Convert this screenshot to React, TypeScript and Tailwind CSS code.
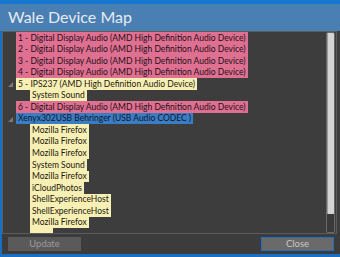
import React from "react";

type Row = { text: string; level: 0 | 1; kind: "pink" | "yellow" | "blue"; glyph?: boolean };

const rows: Row[] = [
  { text: "1 - Digital Display Audio (AMD High Definition Audio Device)", level: 0, kind: "pink" },
  { text: "2 - Digital Display Audio (AMD High Definition Audio Device)", level: 0, kind: "pink" },
  { text: "3 - Digital Display Audio (AMD High Definition Audio Device)", level: 0, kind: "pink" },
  { text: "4 - Digital Display Audio (AMD High Definition Audio Device)", level: 0, kind: "pink" },
  { text: "5 - IPS237 (AMD High Definition Audio Device)", level: 0, kind: "yellow", glyph: true },
  { text: "System Sound", level: 1, kind: "yellow" },
  { text: "6 - Digital Display Audio (AMD High Definition Audio Device)", level: 0, kind: "pink" },
  { text: "Xenyx302USB Behringer (USB Audio CODEC )", level: 0, kind: "blue", glyph: true },
  { text: "Mozilla Firefox", level: 1, kind: "yellow" },
  { text: "Mozilla Firefox", level: 1, kind: "yellow" },
  { text: "Mozilla Firefox", level: 1, kind: "yellow" },
  { text: "System Sound", level: 1, kind: "yellow" },
  { text: "Mozilla Firefox", level: 1, kind: "yellow" },
  { text: "iCloudPhotos", level: 1, kind: "yellow" },
  { text: "ShellExperienceHost", level: 1, kind: "yellow" },
  { text: "ShellExperienceHost", level: 1, kind: "yellow" },
  { text: "Mozilla Firefox", level: 1, kind: "yellow" },
];

const kindClass: Record<Row["kind"], string> = {
  pink: "bg-[#df7092] text-[#241018]",
  yellow: "bg-[#f7efb3] text-[#1c1a10]",
  blue: "bg-[#3b7dc2] text-[#0b1830]",
};

function Glyph() {
  return (
    <svg width="5" height="5" viewBox="0 0 5 5" className="absolute left-[5px] top-[4px]">
      <polygon points="5,0 5,5 0,5" fill="#7a7a7a" />
    </svg>
  );
}

export default function App() {
  return (
    <div className="w-[340px] h-[257px] flex flex-col overflow-hidden bg-[#3c3c3c] font-['Lato','Noto_Sans',sans-serif]">
      <div className="h-[4px] bg-[#1677d2] shrink-0" />
      <div className="h-[27px] shrink-0 bg-[#4a7fb4] flex items-center pl-[8px] pb-[2px] text-[16px] text-[#e6ebf0]">
        Wale Device Map
      </div>
      <div className="flex-1 flex flex-col border-l-2 border-b-[3px] border-[#1b6fc0] bg-[#3c3c3c]">
        <div className="h-[203px] mr-[3px] border border-[#5c5c5c] bg-[#3d3d3d] flex overflow-hidden">
          <div className="flex-1 flex flex-col overflow-hidden">
            {rows.map((r, i) => (
              <div
                key={i}
                className={`relative h-[11.55px] shrink-0 flex items-center ${r.level === 0 ? "pl-[13px]" : "pl-[27px]"}`}
              >
                {r.glyph && <Glyph />}
                <span
                  className={`h-full flex items-center px-[2px] whitespace-nowrap text-[8.5px] leading-none ${kindClass[r.kind]}`}
                >
                  {r.text}
                </span>
              </div>
            ))}
            <div className="relative h-[11.55px] shrink-0 flex pl-[27px]">
              <span className="h-full w-[23px] bg-[#f7efb3]" />
            </div>
          </div>
          <div className="w-[10px] shrink-0 pr-[1px] flex">
            <div className="flex-1 flex flex-col border border-[#6a6a6a] rounded-[2px] overflow-hidden">
              <div className="h-[181px] bg-[#d4d4d4] border-l border-[#9a9a9a]" />
              <div className="flex-1 bg-[#3a3a3a]" />
            </div>
          </div>
        </div>
        <div className="flex-1 flex items-center justify-between pl-[6px] pr-[6px]">
          <button className="w-[73px] h-[14px] bg-[#5a5a5a] text-[#9c9c9c] text-[9.5px] leading-none flex items-center justify-center">
            Update
          </button>
          <button className="w-[73px] h-[14px] bg-[#6a6a6a] border border-[#1f6fc2] text-[#c8c8c8] text-[9.5px] leading-none flex items-center justify-center">
            Close
          </button>
        </div>
      </div>
    </div>
  );
}
